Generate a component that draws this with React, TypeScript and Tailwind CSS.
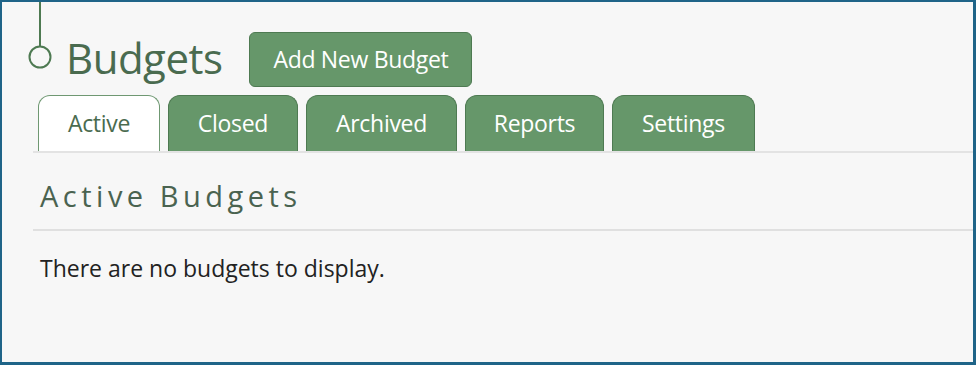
export default function App() {
  const tabs = ["Closed", "Archived", "Reports", "Settings"]
  const font = { fontFamily: '"Open Sans", "Liberation Sans", sans-serif' }

  return (
    <div
      className="w-[976px] h-[365px] bg-[#f7f7f7] border-t-2 border-l-2 border-r-[3px] border-b-[3px] border-[#1f6488] flex flex-col"
      style={font}
    >
      {/* Header */}
      <div className="flex items-start pl-[25px]">
        <svg width="28" height="70" viewBox="0 0 28 70" className="shrink-0">
          <line x1="13" y1="0" x2="13" y2="44" stroke="#4e7a52" strokeWidth="2" />
          <circle cx="13" cy="55" r="10.5" fill="#f7f7f7" stroke="#4e7a52" strokeWidth="2" />
        </svg>
        <h1 className="ml-[11px] mt-[32px] text-[42px] leading-[48px] tracking-[-0.5px] text-[#4a6b4f]">Budgets</h1>
        <button
          type="button"
          className="ml-[27px] mt-[30px] w-[223px] h-[55px] rounded-md bg-[#66976a] border border-[#4e7a52] text-white text-[23px] tracking-[-0.3px]"
        >
          Add New Budget
        </button>
      </div>

      {/* Tabs */}
      <div className="mt-[8px] ml-[31px] flex items-end gap-2 border-b-2 border-[#e3e3e3]">
        <div className="ml-[5px] w-[122px] h-[56px] rounded-t-xl border border-b-0 border-[#6f9872] bg-white flex items-center justify-center text-[23px] tracking-[-0.3px] text-[#4a6b4f]">
          Active
        </div>
        {tabs.map((t) => (
          <div
            key={t}
            className={
              "h-[56px] rounded-t-xl border border-b-0 border-[#4e7a52] bg-[#66976a] flex items-center justify-center text-[23px] tracking-[-0.3px] text-white " +
              (t === "Closed" ? "w-[130px]" : t === "Archived" ? "w-[151px]" : t === "Reports" ? "w-[139px]" : "w-[143px]")
            }
          >
            {t}
          </div>
        ))}
      </div>

      {/* Section */}
      <div className="ml-[31px]">
        <h2 className="pl-[7px] pt-[24px] pb-[14px] text-[29px] leading-[38px] tracking-[4.5px] text-[#4a6350] border-b-2 border-[#e0e0e0]">
          Active Budgets
        </h2>
        <p className="pl-[7px] pt-[21px] text-[23px] leading-[32px] text-[#222]">There are no budgets to display.</p>
      </div>
    </div>
  )
}
